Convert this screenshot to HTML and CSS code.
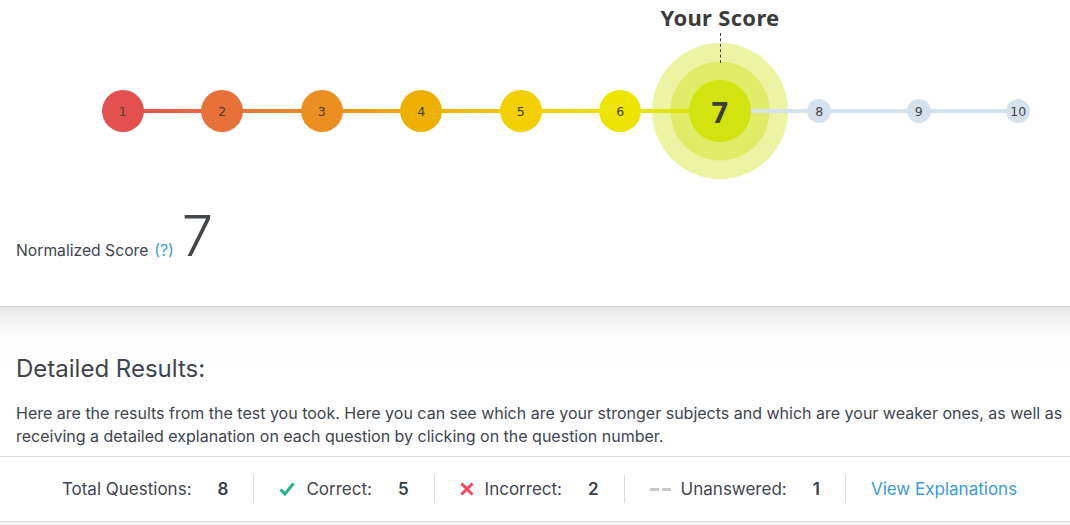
FILE: index.html
```html
<!DOCTYPE html>
<html lang="en">
<head>
<meta charset="utf-8">
<title>Score</title>
<link rel="stylesheet" href="styles.css">
</head>
<body>
<section class="top">
  <div class="chart">
    <div class="halo"></div>
    <div class="track"></div>
    <div class="your-score">Your Score</div>
    <div class="pointer"></div>
    <div class="nodes">
      <div class="slot"><span class="node n1">1</span></div>
      <div class="slot"><span class="node n2">2</span></div>
      <div class="slot"><span class="node n3">3</span></div>
      <div class="slot"><span class="node n4">4</span></div>
      <div class="slot"><span class="node n5">5</span></div>
      <div class="slot"><span class="node n6">6</span></div>
      <div class="slot"><span class="node current">7</span></div>
      <div class="slot"><span class="node small">8</span></div>
      <div class="slot"><span class="node small">9</span></div>
      <div class="slot"><span class="node small">10</span></div>
    </div>
  </div>
  <div class="normalized">
    <span class="norm-label">Normalized Score</span>
    <span class="help">(?)</span>
    <span class="norm-value">7</span>
  </div>
</section>
<section class="details">
  <h2 class="details-title">Detailed Results:</h2>
  <p class="details-text">Here are the results from the test you took. Here you can see which are your stronger subjects and which are your weaker ones, as well as receiving a detailed explanation on each question by clicking on the question number.</p>
  <div class="stats">
    <div class="stat"><span class="stat-label">Total Questions:</span><span class="stat-value">8</span></div>
    <span class="sep"></span>
    <div class="stat">
      <svg class="icon" width="16" height="14" viewBox="0 0 16 14"><path d="M1.5 7.5 L6 12 L14.5 1.5" fill="none" stroke="#22b38b" stroke-width="3"/></svg>
      <span class="stat-label">Correct:</span><span class="stat-value">5</span>
    </div>
    <span class="sep"></span>
    <div class="stat">
      <svg class="icon" width="14" height="14" viewBox="0 0 14 14"><path d="M1.5 1.5 L12.5 12.5 M12.5 1.5 L1.5 12.5" fill="none" stroke="#f1465c" stroke-width="3"/></svg>
      <span class="stat-label">Incorrect:</span><span class="stat-value">2</span>
    </div>
    <span class="sep"></span>
    <div class="stat">
      <span class="dashes"><i></i><i></i></span>
      <span class="stat-label">Unanswered:</span><span class="stat-value">1</span>
    </div>
    <span class="sep"></span>
    <a class="view-link" href="#">View Explanations</a>
  </div>
</section>
<div class="bottom-fill"></div>
</body>
</html>
```
FILE: styles.css
```css
* { box-sizing: border-box; }
html, body { margin: 0; padding: 0; background: #fff; }
body { font-family: Inter, "Liberation Sans", sans-serif; color: #3d4450; width: 1070px; height: 525px; overflow: hidden; }

.top { height: 307px; border-bottom: 1px solid #c6cdd9; }

.chart { position: relative; height: 208px; }

.halo {
  position: absolute; left: 652px; top: 43px; width: 136px; height: 136px;
  border-radius: 50%;
  background: radial-gradient(circle at center, #e0eb68 0, #e0eb68 49px, #ecf4a3 50px);
  z-index: 0;
}
.track {
  position: absolute; left: 123px; top: 109px; width: 895px; height: 4px; z-index: 1;
  background: linear-gradient(to right,
    #e4504e 0px, #e8703a 100px, #ea8f21 199px, #eeae03 298px,
    #f2cb00 398px, #ede300 497px, #d5e40a 597px, #d6e1ee 597px, #d6e1ee 895px);
}
.your-score {
  position: absolute; left: 720px; top: 2px; transform: translateX(-50%);
  font-family: "Noto Sans", "Open Sans", sans-serif; font-weight: 700; font-size: 22px;
  line-height: 30px; color: #3b3b3b; letter-spacing: 0.3px; white-space: nowrap;
}
.pointer {
  position: absolute; left: 720px; top: 33px; height: 30px; width: 0;
  border-left: 1px dashed #444;
}
.nodes {
  position: relative; z-index: 2;
  display: grid; grid-template-columns: repeat(10, 99.5px);
  align-items: center; padding-left: 73px; padding-top: 80px;
}
.slot { display: flex; justify-content: center; align-items: center; }
.node {
  width: 42px; height: 42px; border-radius: 50%;
  display: flex; align-items: center; justify-content: center;
  font-family: "DejaVu Sans", sans-serif; font-size: 12.5px; color: #463f35;
}
.n1 { background: #e44f4f; }
.n2 { background: #e8713a; }
.n3 { background: #ea8f20; }
.n4 { background: #eeb000; }
.n5 { background: #f2cf00; }
.n6 { background: #ede400; }
.current {
  width: 62px; height: 62px; background: #d3e30f;
  font-family: "Noto Sans", "Open Sans", sans-serif; font-weight: 700; font-size: 29px; color: #3d3d3d;
}
.small { width: 24px; height: 24px; background: #d6e1ee; font-size: 12.5px; color: #444; }

.normalized { display: flex; align-items: baseline; padding-left: 16px; }
.norm-label { font-size: 15.7px; color: #3d4450; }
.help { font-size: 15.7px; color: #3b9bdb; margin-left: 6px; }
.norm-value { font-size: 56px; font-weight: 300; line-height: 56px; color: #43464b; margin-left: 8px; }

.details { background: linear-gradient(#e6e6e6 0, #f7f7f7 18px, #fdfdfd 32px, #fff 60px); padding-top: 47px; }
.details-title { margin: 0; padding-left: 16px; font-size: 24px; font-weight: 400; line-height: 29px; color: #3d4450; }
.details-text { margin: 19px 0 8px; padding: 0 4px 0 16px; font-size: 16px; line-height: 23px; color: #3d4450; }

.stats {
  display: flex; align-items: center; justify-content: center;
  height: 66px; padding-left: 9px;
  border-top: 1px solid #dcdcdc; border-bottom: 1px solid #dcdcdc;
  font-size: 17px; color: #3f4552; background: #fff;
}
.stat { display: flex; align-items: center; }
.stat-label { white-space: nowrap; }
.stat-value { font-weight: 600; color: #3a3e45; margin-left: 26px; }
.icon { margin-right: 11px; flex: none; }
.sep { width: 1px; height: 28px; background: #dadada; margin: 0 25px; }
.dashes { display: flex; gap: 3px; margin-right: 10px; }
.dashes i { display: block; width: 9px; height: 3px; background: #c9c9c9; }
.view-link { color: #3a9ad9; text-decoration: none; white-space: nowrap; }

.bottom-fill { height: 3px; background: #f3f3f3; }
```
